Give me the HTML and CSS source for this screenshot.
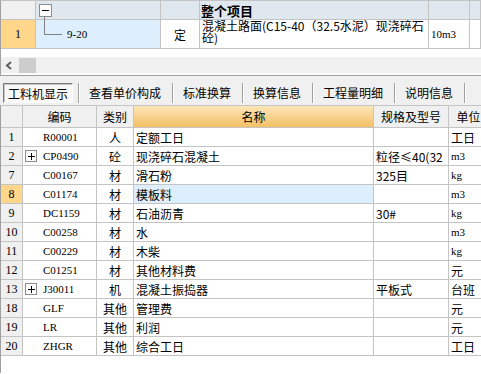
FILE: index.html
```html
<!DOCTYPE html>
<html>
<head>
  <meta charset="UTF-8">
  <title>工料机显示</title>
  <link rel="stylesheet" href="styles.css">
</head>
<body>
  <div class="top-panel">
    <div class="top-row head">
      <div class="cell num-head"></div>
      <div class="cell code">
        <svg class="fold" width="13" height="13" viewBox="0 0 13 13"><rect x="0.5" y="0.5" width="12" height="12" fill="#fff" stroke="#8c8c8c"/><path d="M3 6.5h7" stroke="#000"/></svg>
      </div>
      <div class="cell"></div>
      <div class="cell title">整个项目</div>
      <div class="cell"></div>
      <div class="cell"></div>
    </div>
    <div class="top-row item">
      <div class="cell num current">1</div>
      <div class="cell code branch-cell"><span class="branch"></span><span class="latin">9-20</span></div>
      <div class="cell center">定</div>
      <div class="cell name-wrap">混凝土路面(C15-40（32.5水泥）现浇碎石<br>砼)</div>
      <div class="cell"><span class="latin">10m3</span></div>
      <div class="cell"></div>
    </div>
    <div class="top-blank"></div>
    <div class="hscroll">
      <svg class="arrow" width="8" height="9" viewBox="0 0 8 9"><path d="M6 1L2 4.5L6 8" fill="none" stroke="#606060" stroke-width="2"/></svg>
      <span class="thumb"></span>
    </div>
  </div>

  <div class="tabs">
    <div class="tab active">工料机显示</div>
    <span class="sep"></span>
    <div class="tab">查看单价构成</div>
    <span class="sep"></span>
    <div class="tab">标准换算</div>
    <span class="sep"></span>
    <div class="tab">换算信息</div>
    <span class="sep"></span>
    <div class="tab">工程量明细</div>
    <span class="sep"></span>
    <div class="tab">说明信息</div>
    <span class="sep"></span>
  </div>

  <div class="detail">
    <div class="d-row head">
      <div class="cell"></div>
      <div class="cell center">编码</div>
      <div class="cell center">类别</div>
      <div class="cell center name-head">名称</div>
      <div class="cell center">规格及型号</div>
      <div class="cell center">单位</div>
    </div>
    <div class="d-row">
      <div class="cell num">1</div>
      <div class="cell code-pad latin">R00001</div>
      <div class="cell center">人</div>
      <div class="cell text">定额工日</div>
      <div class="cell text"></div>
      <div class="cell text">工日</div>
    </div>
    <div class="d-row">
      <div class="cell num">2</div>
      <div class="cell code-plus"><svg class="plus" width="12" height="12" viewBox="0 0 12 12"><rect x="0.5" y="0.5" width="11" height="11" fill="#fff" stroke="#8c8c8c"/><path d="M2.5 6h7M6 2.5v7" stroke="#000"/></svg><span class="latin">CP0490</span></div>
      <div class="cell center">砼</div>
      <div class="cell text">现浇碎石混凝土</div>
      <div class="cell text">粒径≤40(32</div>
      <div class="cell text latin">m3</div>
    </div>
    <div class="d-row">
      <div class="cell num">7</div>
      <div class="cell code-pad latin">C00167</div>
      <div class="cell center">材</div>
      <div class="cell text">滑石粉</div>
      <div class="cell text">325目</div>
      <div class="cell text latin">kg</div>
    </div>
    <div class="d-row">
      <div class="cell num current">8</div>
      <div class="cell code-pad latin">C01174</div>
      <div class="cell center">材</div>
      <div class="cell text selected">模板料</div>
      <div class="cell text"></div>
      <div class="cell text latin">m3</div>
    </div>
    <div class="d-row">
      <div class="cell num">9</div>
      <div class="cell code-pad latin">DC1159</div>
      <div class="cell center">材</div>
      <div class="cell text">石油沥青</div>
      <div class="cell text">30#</div>
      <div class="cell text latin">kg</div>
    </div>
    <div class="d-row">
      <div class="cell num">10</div>
      <div class="cell code-pad latin">C00258</div>
      <div class="cell center">材</div>
      <div class="cell text">水</div>
      <div class="cell text"></div>
      <div class="cell text latin">m3</div>
    </div>
    <div class="d-row">
      <div class="cell num">11</div>
      <div class="cell code-pad latin">C00229</div>
      <div class="cell center">材</div>
      <div class="cell text">木柴</div>
      <div class="cell text"></div>
      <div class="cell text latin">kg</div>
    </div>
    <div class="d-row">
      <div class="cell num">12</div>
      <div class="cell code-pad latin">C01251</div>
      <div class="cell center">材</div>
      <div class="cell text">其他材料费</div>
      <div class="cell text"></div>
      <div class="cell text">元</div>
    </div>
    <div class="d-row">
      <div class="cell num">13</div>
      <div class="cell code-plus"><svg class="plus" width="12" height="12" viewBox="0 0 12 12"><rect x="0.5" y="0.5" width="11" height="11" fill="#fff" stroke="#8c8c8c"/><path d="M2.5 6h7M6 2.5v7" stroke="#000"/></svg><span class="latin">J30011</span></div>
      <div class="cell center">机</div>
      <div class="cell text">混凝土振捣器</div>
      <div class="cell text">平板式</div>
      <div class="cell text">台班</div>
    </div>
    <div class="d-row">
      <div class="cell num">18</div>
      <div class="cell code-pad latin">GLF</div>
      <div class="cell center">其他</div>
      <div class="cell text">管理费</div>
      <div class="cell text"></div>
      <div class="cell text">元</div>
    </div>
    <div class="d-row">
      <div class="cell num">19</div>
      <div class="cell code-pad latin">LR</div>
      <div class="cell center">其他</div>
      <div class="cell text">利润</div>
      <div class="cell text"></div>
      <div class="cell text">元</div>
    </div>
    <div class="d-row">
      <div class="cell num">20</div>
      <div class="cell code-pad latin">ZHGR</div>
      <div class="cell center">其他</div>
      <div class="cell text">综合工日</div>
      <div class="cell text"></div>
      <div class="cell text">工日</div>
    </div>
  </div>
</body>
</html>
```

FILE: styles.css
```css
:root {
  --grid-line: #c4c4c4;
  --frame: #a0a0a0;
  --panel-bg: #f0f0f0;
  --head-bg: #dfe7ef;
  --current-bg: #ffd68a;
  --selected-bg: #ddeefc;
}

body {
  margin: 0;
  width: 481px;
  height: 374px;
  overflow: hidden;
  background: #fff;
  color: #000;
  font-family: "Noto Sans CJK SC", sans-serif;
  font-size: 12px;
}

.latin {
  font-family: "Liberation Serif", serif;
  font-size: 11px;
}

.cell {
  box-sizing: border-box;
  display: flex;
  align-items: center;
  border-right: 1px solid var(--grid-line);
  border-bottom: 1px solid var(--grid-line);
  overflow: hidden;
  white-space: nowrap;
}

.center {
  justify-content: center;
}

/* Top grid: the item list */
.top-panel {
  border-top: 1px solid var(--grid-line);
  border-left: 1px solid var(--frame);
}

.top-row {
  display: grid;
  grid-template-columns: 35px 125px 39px 229px 41px 1fr;
}

.top-row.head {
  height: 19px;
  background: var(--head-bg);
}

.top-row.head .num-head {
  background: var(--panel-bg);
}

.top-row.item {
  height: 29px;
}

.fold {
  margin-left: 3px;
  shape-rendering: crispEdges;
}

.title {
  padding-left: 1px;
  font-size: 13px;
  font-weight: 700;
}

.num {
  justify-content: center;
  background: var(--panel-bg);
  font-family: "Liberation Serif", serif;
  font-size: 12px;
}

.num.current {
  background: var(--current-bg);
}

.branch-cell {
  position: relative;
  overflow: visible;
  padding-left: 29px;
  background: var(--selected-bg);
}

.branch {
  position: absolute;
  left: 8px;
  top: -3px;
  width: 18px;
  height: 18px;
  box-sizing: border-box;
  border-left: 1px solid #808080;
  border-bottom: 1px solid #808080;
}

.name-wrap {
  align-items: flex-start;
  padding: 0 2px;
  line-height: 12px;
  white-space: normal;
}

.top-row .latin {
  padding-left: 2px;
}

.top-blank {
  height: 8px;
}

.hscroll {
  display: flex;
  align-items: center;
  height: 16px;
  background: var(--panel-bg);
  border-bottom: 2px solid #fbfbfb;
}

.arrow {
  margin-left: 4px;
}

.thumb {
  width: 17px;
  height: 15px;
  margin-left: 6px;
  background: #cdcdcd;
}

/* Tab strip */
.tabs {
  display: flex;
  align-items: flex-start;
  height: 30px;
  padding-top: 7px;
  box-sizing: border-box;
  border-top: 1px solid var(--frame);
  background: var(--panel-bg);
}

.tab {
  height: 20px;
  line-height: 19px;
  padding: 0 11px 0 10px;
  box-sizing: border-box;
}

.tab.active {
  margin: 0 5px 0 3px;
  padding: 0 4px;
  border: 1px solid;
  border-color: #7a7a7a #ffffff #ffffff #7a7a7a;
  box-shadow: inset 1px 1px 0 #c8c8c8;
  background: #f8f8f8;
}

.sep {
  width: 1px;
  height: 20px;
  background: var(--frame);
  box-shadow: 1px 0 0 #fff;
}

/* Lower grid: resources of the item */
.detail {
  box-sizing: border-box;
  height: 268px;
  border-top: 1px solid var(--grid-line);
  border-left: 1px solid var(--frame);
}

.d-row {
  display: grid;
  grid-template-columns: 22px 74px 37px 240px 75px 40px;
  height: 19px;
}

.d-row.head {
  height: 22px;
  background: var(--panel-bg);
}

.name-head {
  background: linear-gradient(#fde6b9, #f3c066);
}

.text {
  padding-left: 2px;
}

.text.selected {
  background: var(--selected-bg);
}

.code-pad {
  padding-left: 20px;
}

.code-plus {
  padding-left: 2px;
}

.plus {
  margin-right: 6px;
  shape-rendering: crispEdges;
}
```
